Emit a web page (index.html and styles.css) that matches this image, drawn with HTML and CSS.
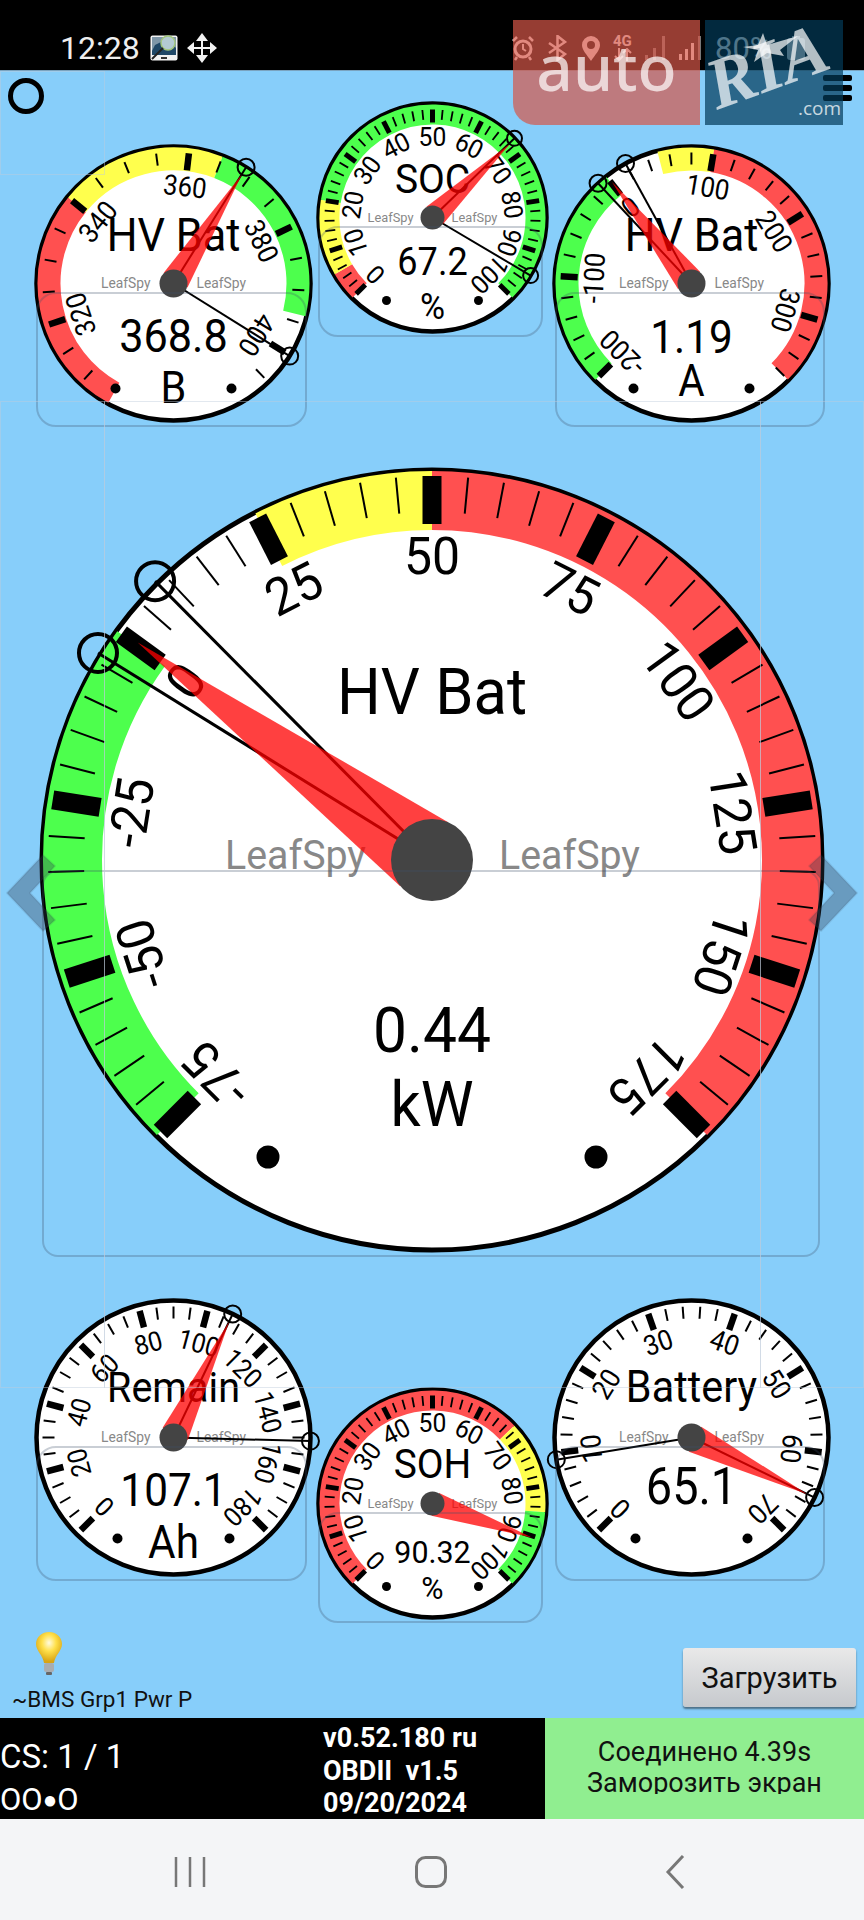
FILE: index.html
```html
<!DOCTYPE html>
<html lang="ru">
<head>
    <meta charset="UTF-8">
    <meta name="viewport" content="width=device-width, initial-scale=1.0">
    <title>LeafSpy</title>
    <link rel="stylesheet" href="styles.css">
</head>
<body>
    <div class="status">
        <span class="clock">12:28</span>
        <svg class="car-icon" viewBox="0 0 28 26">
            <rect x="0.5" y="0.5" width="27" height="25" rx="2" fill="#f2f2f2"/>
            <rect x="2" y="2" width="24" height="18" fill="#7f97a8"/>
            <path d="M2 16 L5 10 L11 7 L20 7 L26 13 L26 20 L2 20 Z" fill="#1f4766"/>
            <circle cx="18" cy="8" r="7" fill="#b4cbd2" stroke="#a3c77c" stroke-width="1.5"/>
            <path d="M13 13 L2 24" stroke="#222" stroke-width="2"/>
            <rect x="11" y="22" width="6" height="2" fill="#333"/>
        </svg>
        <svg class="move-icon" viewBox="0 0 30 30">
            <path d="M15 0 L21 8 L9 8 Z M15 30 L21 22 L9 22 Z M0 15 L7 9 L7 21 Z M30 15 L23 9 L23 21 Z" fill="#f2f2f2"/>
            <path d="M15 8 V22 M7 15 H23" stroke="#f2f2f2" stroke-width="2"/>
        </svg>
        <div class="status-right">
            <svg class="stat-icon" width="22" height="26" viewBox="0 0 22 26">
                <circle cx="11" cy="14" r="8" fill="none" stroke="#fff" stroke-width="3"/>
                <path d="M11 9 V14 L14 16" fill="none" stroke="#fff" stroke-width="2"/>
                <path d="M1 6 L5 2 M21 6 L17 2 M5 22 L3 25 M17 22 L19 25" stroke="#fff" stroke-width="2.5"/>
            </svg>
            <svg class="stat-icon" width="23" height="26" viewBox="0 0 23 26">
                <path d="M3 8 L19 19 L11.5 25 V1 L19 7 L3 18" fill="none" stroke="#fff" stroke-width="2.5"/>
            </svg>
            <svg class="stat-icon" width="20" height="26" viewBox="0 0 20 26">
                <path d="M10 26 C6 20 1 15 1 10 A9 9 0 0 1 19 10 C19 15 14 20 10 26 Z M10 6 A4 4 0 1 0 10 14 A4 4 0 1 0 10 6 Z" fill="#fff" fill-rule="evenodd"/>
            </svg>
            <div class="net-type">4G<svg width="20" height="13" viewBox="0 0 20 13"><path d="M6 0 V11 M2 8 L6 12 L10 8 M14 13 V2 M10 5 L14 1 L18 5" fill="none" stroke="#fff" stroke-width="2"/></svg></div>
            <svg class="stat-icon signal-dim" width="22" height="24" viewBox="0 0 22 24">
                <rect x="0" y="19" width="3" height="5" fill="#fff"/><rect x="8" y="12" width="3" height="12" fill="#fff"/><rect x="17" y="0" width="3" height="24" fill="#fff"/>
            </svg>
            <svg class="stat-icon" width="22" height="24" viewBox="0 0 22 24">
                <rect x="0" y="18" width="3" height="6" fill="#fff"/><rect x="6" y="13" width="3" height="11" fill="#fff"/><rect x="12" y="7" width="3" height="17" fill="#fff"/><rect x="19" y="0" width="3" height="24" fill="#777"/>
            </svg>
            <span class="battery-text">80%</span>
            <svg class="stat-icon" width="18" height="24" viewBox="0 0 18 24">
                <rect x="0" y="2" width="18" height="22" rx="3" fill="#ddd"/>
                <rect x="5" y="0" width="8" height="3" fill="#ddd"/>
            </svg>
        </div>
    </div>

    <div class="dash" id="dash">
        <div class="view view-corner"></div>
        <div class="view view-left"></div>
        <div class="view view-mid"></div>
        <div class="view view-right"></div>
        <div class="hold-ring"></div>
        <div class="menu-bars"><span></span><span></span><span></span></div>

        <div class="foot">
            <div class="foot-left">
                <svg class="bulb" viewBox="0 0 28 44">
                    <defs>
                        <radialGradient id="glass" cx="50%" cy="35%" r="60%">
                            <stop offset="0" stop-color="#fffbe0"/>
                            <stop offset="0.45" stop-color="#ffe04a"/>
                            <stop offset="1" stop-color="#d9a514"/>
                        </radialGradient>
                    </defs>
                    <path d="M14 1 C6 1 1 7 1 13 C1 20 8 24 9 32 H19 C20 24 27 20 27 13 C27 7 22 1 14 1 Z" fill="url(#glass)"/>
                    <rect x="9" y="32" width="10" height="9" rx="2" fill="#a9adb0"/>
                    <rect x="11" y="41" width="6" height="3" rx="1" fill="#666"/>
                </svg>
                <div class="foot-label">~BMS Grp1 Pwr P</div>
            </div>
            <button class="load-button">Загрузить</button>
        </div>

        <svg class="side-arrow arrow-left" viewBox="0 0 56 80">
            <path d="M7 40 L43 2 L55 13 L30 40 L55 67 L43 78 Z"/>
        </svg>
        <svg class="side-arrow arrow-right" viewBox="0 0 56 80">
            <path d="M49 40 L13 2 L1 13 L26 40 L1 67 L13 78 Z"/>
        </svg>
    </div>

    <div class="info">
        <div class="info-left">
            <div class="cs">
                <div class="cs-count">CS: 1 / 1</div>
                <div class="cs-flags">OO<span class="cs-dot">●</span>O</div>
            </div>
            <div class="version">
                <div>v0.52.180 ru</div>
                <div>OBDII&nbsp; v1.5</div>
                <div>09/20/2024</div>
            </div>
        </div>
        <div class="info-right">
            <div class="conn">
                <div>Соединено 4.39s</div>
                <div>Заморозить экран</div>
            </div>
        </div>
    </div>

    <div class="nav">
        <svg width="32" height="32" viewBox="0 0 32 32"><path d="M2 1 V31 M16 1 V31 M30 1 V31" stroke="#777" stroke-width="2.5"/></svg>
        <svg width="32" height="32" viewBox="0 0 32 32"><rect x="1.5" y="1.5" width="29" height="29" rx="9" fill="none" stroke="#777" stroke-width="3"/></svg>
        <svg class="nav-back" width="20" height="34" viewBox="0 0 20 34"><path d="M18 1 L3 17 L18 33" fill="none" stroke="#777" stroke-width="3"/></svg>
    </div>

    <div class="ad ad-auto">auto</div>
    <div class="ad ad-ria">
        <svg width="138" height="105" viewBox="0 0 138 105">
            <polygon class="ria-mark" points="58,13 62,25 93,16 75,30 79,36 62,33 49,42 53,30 38,27 53,25"/>
            <text class="ria-name" transform="translate(12 90) rotate(-20)">RIA</text>
            <text class="ria-dom" x="93" y="95">.com</text>
        </svg>
    </div>

    <script src="gauges.js"></script>
</body>
</html>
```

FILE: styles.css
```css
* {
    box-sizing: border-box;
}
body {
    margin: 0;
    width: 864px;
    height: 1920px;
    overflow: hidden;
    position: relative;
    font-family: Roboto, "Liberation Sans", sans-serif;
    background-color: #87cefa;
}
.status {
    height: 70px;
    background-color: #000;
    display: flex;
    align-items: center;
    padding: 25px 0 0 60px;
    color: #eee;
}
.clock {
    font-size: 32px;
    width: 90px;
}
.car-icon {
    width: 28px;
    height: 26px;
}
.move-icon {
    width: 30px;
    height: 30px;
    margin-left: 9px;
}
.status-right {
    position: absolute;
    left: 512px;
    top: 34px;
    height: 28px;
    display: flex;
    align-items: center;
    gap: 12px;
}
.net-type {
    width: 20px;
    font-size: 15px;
    font-weight: bold;
    line-height: 13px;
    color: #fff;
    display: flex;
    flex-direction: column;
}
.signal-dim {
    opacity: 0.5;
}
.battery-text {
    font-size: 31px;
    color: #fff;
    width: 60px;
    margin-left: 2px;
}
.dash {
    height: 1648px;
    position: relative;
    display: flex;
    flex-direction: column;
    justify-content: flex-end;
    background-color: #87cefa;
    border-top: 1px solid #7aa3bf;
}
.view {
    position: absolute;
    border: 1px solid rgba(190, 205, 220, 0.45);
}
.view-corner {
    left: 0;
    top: 0;
    width: 105px;
    height: 104px;
}
.view-left {
    left: 0;
    top: 330px;
    width: 105px;
    height: 987px;
}
.view-mid {
    left: 104px;
    top: 330px;
    width: 657px;
    height: 987px;
}
.view-right {
    left: 760px;
    top: 330px;
    width: 104px;
    height: 987px;
}
.hold-ring {
    position: absolute;
    left: 8px;
    top: 7px;
    width: 36px;
    height: 36px;
    border: 5px solid #000;
    border-radius: 50%;
}
.menu-bars {
    position: absolute;
    left: 823px;
    top: 4px;
    width: 29px;
    display: flex;
    flex-direction: column;
    gap: 4px;
}
.menu-bars span {
    height: 6px;
    background-color: #000;
    border-radius: 2px;
}
.gauge {
    position: absolute;
    overflow: visible;
}
.gauge text {
    text-anchor: middle;
    fill: #000;
}
.gauge .leaf-text {
    fill: #888;
}
.gauge-box {
    position: absolute;
    border: 2px solid rgba(60, 80, 105, 0.28);
}
.side-arrow {
    position: absolute;
    top: 782px;
    width: 56px;
    height: 80px;
    fill: rgba(50, 60, 80, 0.35);
    stroke: rgba(50, 60, 80, 0.1);
    stroke-width: 2;
    stroke-linejoin: round;
}
.arrow-left {
    left: 0;
}
.arrow-right {
    right: 0;
}
.foot {
    display: flex;
    justify-content: space-between;
    align-items: flex-end;
    padding: 0 8px 8px 12px;
}
.bulb {
    display: block;
    width: 28px;
    height: 44px;
    margin: 0 0 13px 23px;
}
.foot-label {
    font-size: 22.5px;
    line-height: 22px;
    color: #111;
}
.load-button {
    width: 173px;
    height: 59px;
    margin-bottom: 3px;
    font-family: inherit;
    font-size: 29px;
    color: #111;
    padding: 0;
    border: none;
    border-radius: 3px;
    background: linear-gradient(#e9e9e9, #c6c9cd);
    box-shadow: 0 2px 2px rgba(40, 50, 60, 0.6);
}
.info {
    height: 101px;
    display: flex;
}
.info-left {
    width: 545px;
    background-color: #000;
    color: #fff;
    display: flex;
    overflow: hidden;
}
.cs {
    width: 323px;
    padding-top: 19px;
}
.cs-count {
    font-size: 33px;
    line-height: 40px;
}
.cs-flags {
    font-size: 31px;
    line-height: 40px;
    margin-top: 3px;
}
.cs-dot {
    font-size: 24px;
    vertical-align: 2px;
}
.version {
    padding-top: 4px;
    font-size: 27px;
    font-weight: bold;
    line-height: 32.5px;
}
.info-right {
    flex: 1;
    background-color: #90ee90;
    color: #111;
    text-align: center;
    padding-top: 19px;
}
.conn {
    height: 57px;
    overflow: hidden;
    font-size: 27px;
    line-height: 31px;
}
.nav {
    height: 101px;
    background-color: #f4f5f7;
    display: flex;
    align-items: center;
    gap: 209px;
    padding: 5px 0 0 174px;
}
.nav-back {
    margin-left: 9px;
}
.ad {
    position: absolute;
    top: 20px;
    height: 105px;
}
.ad-auto {
    left: 513px;
    width: 187px;
    background-color: rgba(214, 87, 73, 0.7);
    border-bottom-left-radius: 22px;
    font-family: "Noto Sans", sans-serif;
    font-size: 64px;
    font-weight: 500;
    line-height: 94px;
    text-align: center;
    color: rgba(255, 255, 255, 0.7);
}
.ad-ria {
    left: 705px;
    width: 138px;
    background-color: rgba(3, 58, 88, 0.7);
}
.ria-mark {
    fill: rgba(255, 255, 255, 0.7);
}
.ria-name {
    font-family: "Liberation Serif", serif;
    font-weight: bold;
    font-style: italic;
    font-size: 72px;
    fill: rgba(255, 255, 255, 0.7);
}
.ria-dom {
    font-family: "Open Sans", sans-serif;
    font-size: 19px;
    fill: rgba(255, 255, 255, 0.75);
}
```

FILE: gauges.js
```js
// all gauges are drawn from this table, coordinates are page pixels
const DASH_TOP = 71;
const RED = "#ff5050", YELLOW = "#ffff4d", GREEN = "#4dff4d";

const small = {
    r: 137, sw: 4.5, bandOut: 136, bandIn: 113, tickOut: 131, majLen: 17, majW: 6.5, minLen: 12, minW: 2,
    sx: 0.92, labelR: 98, labelFs: 28, leafFs: 15, leafDy: 4, leafL: -23, leafR: 23, hub: 14, hw: 14, fwd: 4, tipR: 129,
    markR: 137, markSize: 8.5, markW: 2, lineW: 2
};
const mid = {
    r: 114, sw: 4.5, bandOut: 113, bandIn: 93, tickOut: 108, majLen: 13, majW: 5, minLen: 10, minW: 1.8,
    sx: 0.95, labelR: 81, labelFs: 26, leafFs: 13.5, leafDy: 4, leafL: -19, leafR: 19, hub: 12, hw: 12, fwd: 3, tipR: 107,
    markR: 114, markSize: 7.5, markW: 2, lineW: 2
};

const gauges = [
    // the big one in the middle
    {
        cx: 432, cy: 860, r: 390, sw: 5, bandOut: 389, bandIn: 330, tickOut: 384, majLen: 48, majW: 19, minLen: 36, minW: 2,
        sx: 0.96, labelR: 305, labelFs: 52, leafFs: 41, leafDy: 9, leafL: -66, leafR: 67, hub: 41, hw: 40, fwd: 10, tipR: 366,
        markR: 393, markSize: 19, markW: 4, lineW: 3,
        min: -75, max: 175, step: 5, major: 25, a0: -135, deg: 1.08,
        bands: [[-75, 0, GREEN], [25, 50, YELLOW], [50, 175, RED]],
        title: ["HV Bat", -146, 64], value: ["0.44", 192, 63], unit: ["kW", 266, 62],
        dots: [164, 297, 11.5], val: 0.44, marks: [-44.8, -58.2]
    },
    {
        ...small, cx: 173, cy: 283, min: 310, max: 405, step: 5, major: 20, a0: -137, deg: 2.875,
        bands: [[305, 340, RED], [340, 365, YELLOW], [365, 393.8, GREEN]],
        title: ["HV Bat", -33, 47], value: ["368.8", 68, 47], unit: ["B", 119, 45],
        dots: [58, 105, 5], val: 368.8, marks: [32, 122]
    },
    {
        ...mid, cx: 432, cy: 217, min: 0, max: 100, step: 2, major: 10, a0: -135, deg: 2.7,
        bands: [[0, 5.5, RED], [5.5, 20, YELLOW], [20, 100, GREEN]],
        title: ["SOC", -25, 41], value: ["67.2", 57, 38], unit: ["%", 101, 36],
        dots: [46, 83, 4.5], val: 67.2, marks: [46, 120.6]
    },
    {
        ...small, cx: 691, cy: 283, min: -200, max: 360, step: 20, major: 100, a0: -135, deg: 0.482,
        bands: [[-200, 0, GREEN], [50, 100, YELLOW], [100, 360, RED]],
        title: ["HV Bat", -33, 47], value: ["1.19", 69, 46], unit: ["A", 112, 44],
        dots: [58, 105, 5], val: 1.19, marks: [-43, -28.8]
    },
    {
        ...small, cx: 173, cy: 1437, min: 0, max: 180, step: 5, major: 20, a0: -135, deg: 1.5, labelFs: 27,
        bands: [],
        title: ["Remain", -36, 43], value: ["107.1", 68, 46], unit: ["Ah", 120, 46],
        dots: [56, 101, 5], val: 107.1, marks: [25.6, 91.5]
    },
    {
        ...mid, cx: 432, cy: 1503, min: 0, max: 100, step: 2, major: 10, a0: -135, deg: 2.7,
        bands: [[0, 67.2, RED], [67.2, 85, YELLOW], [85, 100, GREEN]],
        title: ["SOH", -26, 41], value: ["90.32", 59, 32], unit: ["%", 95, 32],
        dots: [46, 83, 4.5], val: 90.32, marks: [], tipR: 105
    },
    {
        ...small, cx: 691, cy: 1437, min: 0, max: 70, step: 2, major: 10, a0: -135, deg: 3.857, labelR: 101,
        bands: [],
        title: ["Battery", -36, 45], value: ["65.1", 66, 51],
        dots: [56, 101, 5], val: 65.1, marks: [116, -99.3]
    }
];

const boxes = [
    [36, 292, 271, 135, 20], [318, 226, 225, 111, 20], [555, 292, 270, 135, 20],
    [42, 870, 778, 387, 16],
    [36, 1446, 271, 135, 20], [318, 1512, 225, 111, 20], [555, 1446, 270, 135, 20]
];

function pt(r, deg) {
    const a = deg * Math.PI / 180;
    return (r * Math.sin(a)).toFixed(2) + " " + (-r * Math.cos(a)).toFixed(2);
}

// reference text is a bit narrower than the font, sx squeezes it sideways
function text(str, x, y, size, sx, cls, anchor) {
    const extra = (cls ? ` class="${cls}"` : "") + (anchor ? ` style="text-anchor:${anchor}"` : "");
    return `<text transform="translate(${x} ${y}) scale(${sx} 1)" font-size="${size}"${extra}>${str}</text>`;
}

function drawGauge(g) {
    const angle = v => g.a0 + (v - g.min) * g.deg;
    let s = `<circle r="${g.r}" fill="#fff" stroke="#000" stroke-width="${g.sw}"/>`;

    // coloured zones
    const bandR = (g.bandOut + g.bandIn) / 2;
    for (const [from, to, color] of g.bands) {
        const a = angle(from), b = angle(to);
        s += `<path d="M${pt(bandR, a)} A${bandR} ${bandR} 0 ${b - a > 180 ? 1 : 0} 1 ${pt(bandR, b)}" fill="none" stroke="${color}" stroke-width="${g.bandOut - g.bandIn}"/>`;
    }

    // ticks and labels
    for (let v = g.min; v <= g.max + 0.001; v += g.step) {
        const isMajor = v % g.major === 0;
        const a = angle(v);
        const len = isMajor ? g.majLen : g.minLen;
        s += `<path d="M${pt(g.tickOut, a)} L${pt(g.tickOut - len, a)}" stroke="#000" stroke-width="${isMajor ? g.majW : g.minW}"/>`;
        if (isMajor) {
            s += `<g transform="rotate(${a}) translate(0 ${-g.labelR})">${text(v, 0, (g.labelFs * 0.36).toFixed(1), g.labelFs, g.sx)}</g>`;
        }
    }

    s += text(g.title[0], 0, g.title[1], g.title[2], g.sx);
    s += text(g.value[0], 0, g.value[1], g.value[2], g.sx);
    if (g.unit) s += text(g.unit[0], 0, g.unit[1], g.unit[2], g.sx);

    s += text("LeafSpy", g.leafL, g.leafDy, g.leafFs, g.sx, "leaf-text", "end");
    s += text("LeafSpy", g.leafR, g.leafDy, g.leafFs, g.sx, "leaf-text", "start");

    // min and max hold lines go under the needle
    for (const m of g.marks) {
        s += `<path d="M0 0 L${pt(g.markR, m)}" stroke="#000" stroke-width="${g.lineW}"/>`;
    }

    s += `<polygon transform="rotate(${angle(g.val)})" points="${-g.hw},${-g.fwd} ${g.hw},${-g.fwd} 0,${-g.tipR}" fill="rgba(255,0,0,0.75)"/>`;
    s += `<circle r="${g.hub}" fill="#444"/>`;

    for (const m of g.marks) {
        const [x, y] = pt(g.markR, m).split(" ");
        s += `<circle cx="${x}" cy="${y}" r="${g.markSize}" fill="none" stroke="#000" stroke-width="${g.markW}"/>`;
    }

    s += `<circle cx="${-g.dots[0]}" cy="${g.dots[1]}" r="${g.dots[2]}"/>`;
    s += `<circle cx="${g.dots[0]}" cy="${g.dots[1]}" r="${g.dots[2]}"/>`;

    const size = g.r + g.sw;
    const left = g.cx - size, top = g.cy - size - DASH_TOP;
    return `<svg class="gauge" style="left:${left}px;top:${top}px;width:${size * 2}px;height:${size * 2}px" viewBox="${-size} ${-size} ${size * 2} ${size * 2}">${s}</svg>`;
}

const dash = document.getElementById("dash");
let html = gauges.map(drawGauge).join("");
for (const [x, y, w, h, rad] of boxes) {
    html += `<div class="gauge-box" style="left:${x}px;top:${y - DASH_TOP}px;width:${w}px;height:${h}px;border-radius:${rad}px"></div>`;
}
dash.insertAdjacentHTML("afterbegin", html);

// the ring and the side arrows sit over the gauges, keep them last
for (const el of dash.querySelectorAll(".hold-ring, .menu-bars, .side-arrow")) dash.appendChild(el);
```
